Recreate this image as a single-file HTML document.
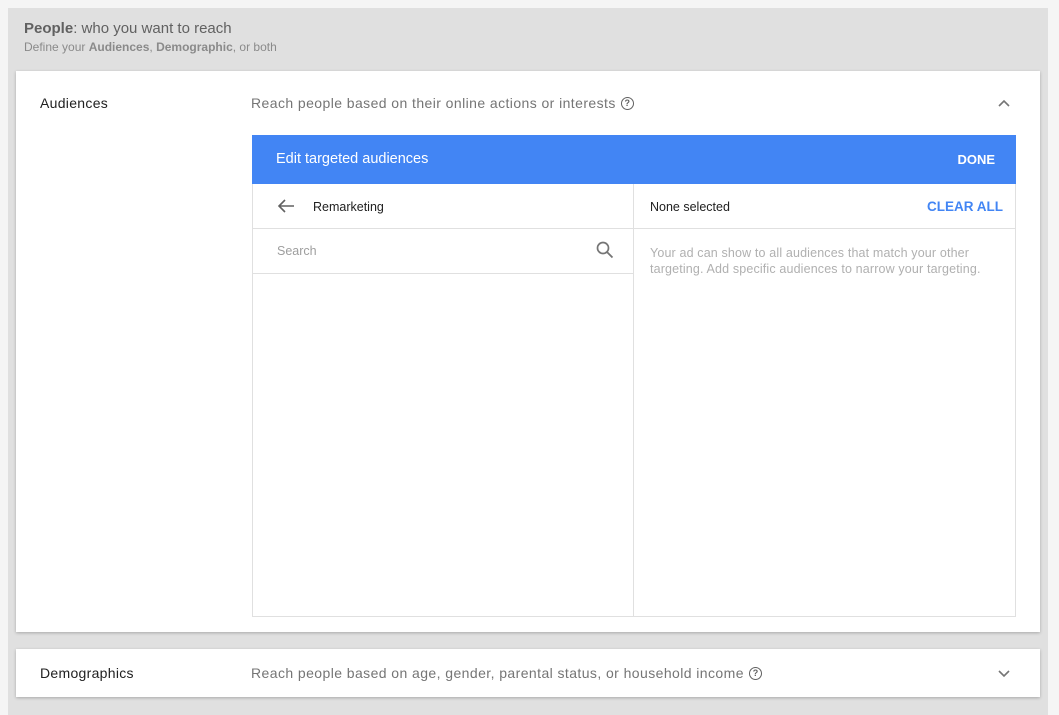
<!DOCTYPE html>
<html><head><meta charset="utf-8"><style>
*{box-sizing:border-box;margin:0;padding:0}
body{width:1059px;height:715px;background:#f5f5f5;font-family:"Liberation Sans",Arial,sans-serif;position:relative;overflow:hidden}
.panel{position:absolute;left:8px;top:8px;width:1040px;height:707px;background:#e0e0e0}
.h1{position:absolute;left:24px;top:20px;font-size:15px;color:#616161}
.h2{position:absolute;left:24px;top:40px;font-size:12px;color:#8a8a8a}
.card{position:absolute;left:16px;width:1024px;background:#fff;box-shadow:0 1px 3px rgba(0,0,0,.25)}
.lbl{position:absolute;left:24px;font-size:14px;color:#212121;letter-spacing:.3px}
.desc{position:absolute;left:235px;font-size:14px;color:#757575;letter-spacing:.42px}
.q{display:inline-block;width:13px;height:13px;border:1.3px solid #616161;border-radius:50%;font-size:9px;text-align:center;line-height:11px;color:#616161;vertical-align:2px;margin-left:5px;font-weight:bold;letter-spacing:0}
.blue{position:absolute;left:236px;top:64px;width:764px;height:49px;background:#4285f4;color:#fff}
.box{position:absolute;left:236px;top:113px;width:764px;height:433px;border:1px solid #e0e0e0;border-top:none}
.vl{position:absolute;left:380px;top:0;width:1px;height:100%;background:#e0e0e0}
.hl{position:absolute;height:1px;background:#e0e0e0}
.t{position:absolute;font-size:12.5px}
</style></head><body>
<div class="panel"></div>
<div class="h1"><b>People</b>: who you want to reach</div>
<div class="h2">Define your <b>Audiences</b>, <b>Demographic</b>, or both</div>

<div class="card" style="top:71px;height:561px">
 <div class="lbl" style="top:24px">Audiences</div>
 <div class="desc" style="top:24px">Reach people based on their online actions or interests<span class="q">?</span></div>
 <svg style="position:absolute;left:981px;top:27px" width="14" height="10" viewBox="0 0 14 10"><path d="M2 8 L7 3 L12 8" fill="none" stroke="#757575" stroke-width="1.6"/></svg>
 <div class="blue">
  <div style="position:absolute;left:24px;top:16px;font-size:14.5px">Edit targeted audiences</div>
  <div style="position:absolute;right:21px;top:17px;font-size:13px;font-weight:bold">DONE</div>
 </div>
 <div class="box">
  <div class="vl"></div>
  <div class="hl" style="left:0;top:44px;width:763px"></div>
  <div class="hl" style="left:0;top:89px;width:380px"></div>
  <svg style="position:absolute;left:24px;top:14px" width="18" height="16" viewBox="0 0 18 16"><path d="M17 8H2M8 2L2 8l6 6" fill="none" stroke="#616161" stroke-width="1.6"/></svg>
  <div class="t" style="left:60px;top:16px;color:#212121">Remarketing</div>
  <div class="t" style="left:24px;top:60px;color:#9e9e9e">Search</div>
  <svg style="position:absolute;left:343px;top:57px" width="18" height="18" viewBox="0 0 18 18"><circle cx="7" cy="7" r="5.5" fill="none" stroke="#757575" stroke-width="1.7"/><path d="M11 11l5.5 5.5" stroke="#757575" stroke-width="1.8"/></svg>
  <div class="t" style="left:397px;top:16px;color:#212121">None selected</div>
  <div style="position:absolute;right:12px;top:15px;font-size:13.5px;color:#4285f4;font-weight:bold">CLEAR ALL</div>
  <div class="t" style="left:397px;top:61px;color:#b0b0b0;line-height:16px;width:360px;letter-spacing:.15px">Your ad can show to all audiences that match your other targeting. Add specific audiences to narrow your targeting.</div>
 </div>
</div>

<div class="card" style="top:649px;height:48px">
 <div class="lbl" style="top:16px">Demographics</div>
 <div class="desc" style="top:16px">Reach people based on age, gender, parental status, or household income<span class="q">?</span></div>
 <svg style="position:absolute;left:981px;top:20px" width="14" height="10" viewBox="0 0 14 10"><path d="M2 2 L7 7 L12 2" fill="none" stroke="#757575" stroke-width="1.6"/></svg>
</div>
</body></html>
